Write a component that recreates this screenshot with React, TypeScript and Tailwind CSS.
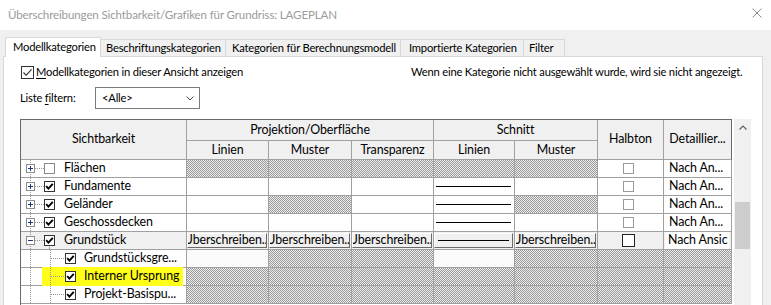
import React from "react";

const HATCH =
  "bg-[image:repeating-conic-gradient(#9a9a9a_0_25%,#ececec_0_50%)] bg-[length:2px_2px]";

function TreeCheck({ checked }: { checked: boolean }) {
  return (
    <span
      className={
        "flex h-[11px] w-[11px] shrink-0 items-center justify-center border bg-white " +
        (checked ? "border-[#333333]" : "border-[#8a8a8a]")
      }
    >
      {checked && (
        <svg width="9" height="9" viewBox="0 0 9 9">
          <path d="M1.2 4.2 L3.4 6.6 L7.8 1.8" fill="none" stroke="#000" strokeWidth="1.9" />
        </svg>
      )}
    </span>
  );
}

function TopTree({ expanded }: { expanded: boolean }) {
  return (
    <svg width="23" height="17" viewBox="0 0 23 17" className="shrink-0">
      <line x1="9.5" y1="0" x2="9.5" y2="17" stroke="#9a9a9a" strokeDasharray="1 1" />
      <line x1="14" y1="8.5" x2="23" y2="8.5" stroke="#9a9a9a" strokeDasharray="1 1" />
      <rect x="5.5" y="4.5" width="8" height="8" fill="#fff" stroke="#8c8c8c" />
      <line x1="7" y1="8.5" x2="12" y2="8.5" stroke="#23357a" />
      {!expanded && <line x1="9.5" y1="6" x2="9.5" y2="11" stroke="#23357a" />}
    </svg>
  );
}

function TopName({ name, checked }: { name: string; checked: boolean }) {
  return (
    <div className="flex h-[18px] items-center border-b border-r border-[#a0a0a0] bg-white">
      <TopTree expanded={false} />
      <TreeCheck checked={checked} />
      <span className="ml-[9px] whitespace-nowrap">{name}</span>
    </div>
  );
}

function ChildName({ name, highlight }: { name: string; highlight?: boolean }) {
  return (
    <div className="flex h-[18px] items-stretch border-b border-r border-[#a0a0a0] bg-white">
      <svg width="21" height="17" viewBox="0 0 21 17" className="shrink-0">
        <line x1="9.5" y1="0" x2="9.5" y2="17" stroke="#9a9a9a" strokeDasharray="1 1" />
      </svg>
      <div className={"-my-px flex w-[141px] items-center " + (highlight ? "bg-[#ffff1a]" : "")}>
        <svg width="23" height="17" viewBox="0 0 23 17" className="shrink-0">
          <line x1="8.5" y1="0" x2="8.5" y2="17" stroke="#9a9a9a" strokeDasharray="1 1" />
          <line x1="9" y1="8.5" x2="22" y2="8.5" stroke="#9a9a9a" strokeDasharray="1 1" />
        </svg>
        <TreeCheck checked />
        <span className="ml-[8px] whitespace-nowrap">{name}</span>
      </div>
    </div>
  );
}

type Kind = "w" | "h" | "l" | "cb" | "nach" | "f";

function DataCell({ kind }: { kind: Kind }) {
  const base = "h-[18px] border-b border-r border-[#a0a0a0] ";
  if (kind === "h") return <div className={base + HATCH} />;
  if (kind === "f") return <div className={base + "bg-[#fafafa]"} />;
  if (kind === "l")
    return (
      <div className={base + "flex items-center bg-white pl-[2px]"}>
        <div className="h-px w-[75px] bg-black" />
      </div>
    );
  if (kind === "cb")
    return (
      <div className={base + "flex items-center bg-white pl-[25px]"}>
        <span className="h-[11px] w-[11px] border border-[#9a9a9a] bg-white" />
      </div>
    );
  if (kind === "nach")
    return (
      <div className={base + "flex items-center whitespace-nowrap bg-white pl-[5px]"}>Nach An...</div>
    );
  return <div className={base + "bg-white"} />;
}

function OverrideButton() {
  return (
    <div className="flex h-[18px] items-start border-b border-r border-[#a0a0a0] bg-[#f0f0f0] pr-[1px] pt-[1px]">
      <div className="flex h-[15px] w-full items-center justify-center overflow-hidden border border-b-[#6a6a6a] border-l-white border-r-[#6a6a6a] border-t-white bg-[#f0f0f0] leading-none">
        <span className="whitespace-nowrap">Überschreiben...</span>
      </div>
    </div>
  );
}

function LineButton() {
  return (
    <div className="flex h-[18px] items-start border-b border-r border-[#a0a0a0] bg-[#f0f0f0] pr-[1px] pt-[1px]">
      <div className="flex h-[15px] w-full items-center overflow-hidden border border-b-[#6a6a6a] border-l-white border-r-[#6a6a6a] border-t-white bg-[#f0f0f0] pl-[3px]">
        <div className="h-px w-[71px] bg-black" />
      </div>
    </div>
  );
}

const rows: { name: string; checked: boolean; cells: Kind[] }[] = [
  { name: "Flächen", checked: false, cells: ["h", "h", "h", "h", "h", "cb", "nach"] },
  { name: "Fundamente", checked: true, cells: ["w", "w", "w", "l", "w", "cb", "nach"] },
  { name: "Geländer", checked: true, cells: ["w", "h", "w", "l", "h", "cb", "nach"] },
  { name: "Geschossdecken", checked: true, cells: ["w", "w", "w", "l", "w", "cb", "nach"] },
];

const children: { name: string; highlight?: boolean; cells: Kind[] }[] = [
  { name: "Grundstücksgre...", cells: ["f", "h", "h", "f", "h", "h", "h"] },
  { name: "Interner Ursprung", highlight: true, cells: ["h", "h", "h", "h", "h", "h", "h"] },
  { name: "Projekt-Basispu...", cells: ["h", "h", "h", "h", "h", "h", "h"] },
];

function HeaderCell({ children, className = "" }: { children?: React.ReactNode; className?: string }) {
  return (
    <div
      className={
        "flex items-center justify-center whitespace-nowrap border-b border-r border-[#a0a0a0] bg-[#f0f0f0] " +
        className
      }
    >
      {children}
    </div>
  );
}

export default function App() {
  return (
    <div className="h-[305px] w-[771px] overflow-hidden bg-[#f0f0f0] font-[Lato,sans-serif] text-black">
      {/* title bar */}
      <div className="flex h-[30px] items-center justify-between bg-white pl-[8px] pr-[9px] text-[11.6px] tracking-[-0.15px] text-[#9b9b9b]">
        <span className="whitespace-nowrap">Überschreibungen Sichtbarkeit/Grafiken für Grundriss: LAGEPLAN</span>
        <svg width="10" height="10" viewBox="0 0 10 10" className="mb-[4px]">
          <path d="M0.5 0.5 L9.5 9.5 M9.5 0.5 L0.5 9.5" stroke="#8c8c8c" strokeWidth="1" />
        </svg>
      </div>

      {/* tabs */}
      <div className="flex items-end whitespace-nowrap pl-[5px] pt-[7px] text-[11.2px] tracking-[-0.2px]">
        <div className="relative z-10 -mb-px flex h-[20px] w-[96px] items-center border border-b-0 border-[#d9d9d9] bg-white pl-[7px]">
          Modellkategorien
        </div>
        <div className="flex h-[17px] w-[125px] items-center border-r border-t border-[#d9d9d9] bg-[#f0f0f0] pl-[5px]">
          Beschriftungskategorien
        </div>
        <div className="flex h-[17px] w-[175px] items-center border-r border-t border-[#d9d9d9] bg-[#f0f0f0] pl-[6px]">
          Kategorien für Berechnungsmodell
        </div>
        <div className="flex h-[17px] w-[123px] items-center border-r border-t border-[#d9d9d9] bg-[#f0f0f0] pl-[8px]">
          Importierte Kategorien
        </div>
        <div className="flex h-[17px] w-[41px] items-center border-r border-t border-[#d9d9d9] bg-[#f0f0f0] pl-[5px]">
          Filter
        </div>
      </div>

      {/* panel */}
      <div className="ml-[3px] h-[260px] w-[760px] border border-[#d9d9d9] bg-white pl-[16px]">
        <div className="mt-[9px] flex h-[13px] items-center whitespace-nowrap text-[11.2px] tracking-[-0.2px]">
          <div className="flex w-[391px] items-center pl-[1px]">
            <span className="flex h-[13px] w-[13px] items-center justify-center border border-[#333333] bg-white">
              <svg width="11" height="11" viewBox="0 0 11 11">
                <path d="M1.5 5.5 L4.2 8.2 L9.6 2.4" fill="none" stroke="#333" strokeWidth="1.1" />
              </svg>
            </span>
            <span className="ml-[2px]">
              <span className="underline underline-offset-2">M</span>odellkategorien in dieser Ansicht anzeigen
            </span>
          </div>
          <span>Wenn eine Kategorie nicht ausgewählt wurde, wird sie nicht angezeigt.</span>
        </div>

        <div className="mt-[8px] flex h-[22px] items-center whitespace-nowrap text-[11.2px] tracking-[-0.2px]">
          <span className="w-[75px]">
            Liste <span className="underline underline-offset-2">f</span>iltern:
          </span>
          <div className="flex h-[22px] w-[105px] items-center justify-between border border-[#7a7a7a] bg-white pl-[6px] pr-[5px]">
            <span>&lt;Alle&gt;</span>
            <svg width="8" height="5" viewBox="0 0 8 5">
              <path d="M0.5 0.5 L4 4 L7.5 0.5" fill="none" stroke="#444" strokeWidth="1" />
            </svg>
          </div>
        </div>

        {/* grid */}
        <div className="mt-[10px] flex text-[12.4px] tracking-[-0.1px]">
          <div className="w-[712px] border-l border-t border-[#696969]">
            <div className="grid grid-cols-[166px_82px_83px_82px_81px_83px_66px_68px] grid-rows-[21px_19px_repeat(8,18px)]">
              <HeaderCell className="row-span-2">Sichtbarkeit</HeaderCell>
              <HeaderCell className="col-span-3">Projektion/Oberfläche</HeaderCell>
              <HeaderCell className="col-span-2">Schnitt</HeaderCell>
              <HeaderCell className="row-span-2">Halbton</HeaderCell>
              <HeaderCell className="row-span-2 border-r-[#696969]">Detaillier...</HeaderCell>
              <HeaderCell>Linien</HeaderCell>
              <HeaderCell>Muster</HeaderCell>
              <HeaderCell>Transparenz</HeaderCell>
              <HeaderCell>Linien</HeaderCell>
              <HeaderCell>Muster</HeaderCell>

              {rows.map((r) => (
                <React.Fragment key={r.name}>
                  <TopName name={r.name} checked={r.checked} />
                  {r.cells.map((c, i) => (
                    <DataCell key={i} kind={c} />
                  ))}
                </React.Fragment>
              ))}

              {/* Grundstück (expanded) */}
              <div className="flex h-[18px] items-center border-b border-r border-[#a0a0a0] bg-[#f0f0f0]">
                <TopTree expanded />
                <div className="flex h-[17px] flex-col items-center">
                  <div className="mt-[3px]">
                    <TreeCheck checked />
                  </div>
                  <div className="mt-px flex-1 border-l border-dotted border-[#9a9a9a]" />
                </div>
                <span className="ml-[9px] whitespace-nowrap">Grundstück</span>
              </div>
              <OverrideButton />
              <OverrideButton />
              <OverrideButton />
              <LineButton />
              <OverrideButton />
              <div className="flex h-[18px] items-center border-b border-r border-[#a0a0a0] bg-[#f0f0f0] pl-[24px]">
                <span className="h-[13px] w-[13px] border border-[#222] bg-white" />
              </div>
              <div className="flex h-[18px] items-start border-b border-r border-[#a0a0a0] bg-[#f0f0f0] pl-[1px] pr-[2px]">
                <div className="flex h-[17px] w-full items-center overflow-hidden whitespace-nowrap bg-white pl-[3px]">
                  Nach Ansic
                </div>
              </div>

              {children.map((c) => (
                <React.Fragment key={c.name}>
                  <ChildName name={c.name} highlight={c.highlight} />
                  {c.cells.map((k, i) => (
                    <DataCell key={i} kind={k} />
                  ))}
                </React.Fragment>
              ))}
            </div>
          </div>

          {/* scrollbar */}
          <div className="ml-[2px] flex h-[200px] w-[17px] flex-col bg-[#f0f0f0]">
            <div className="flex h-[17px] items-center justify-center">
              <svg width="8" height="5" viewBox="0 0 8 5">
                <path d="M0.5 4.5 L4 1 L7.5 4.5" fill="none" stroke="#606060" strokeWidth="1.2" />
              </svg>
            </div>
            <div className="ml-[1px] mt-[66px] h-[47px] w-[15px] bg-[#cdcdcd]" />
          </div>
        </div>
      </div>
    </div>
  );
}
